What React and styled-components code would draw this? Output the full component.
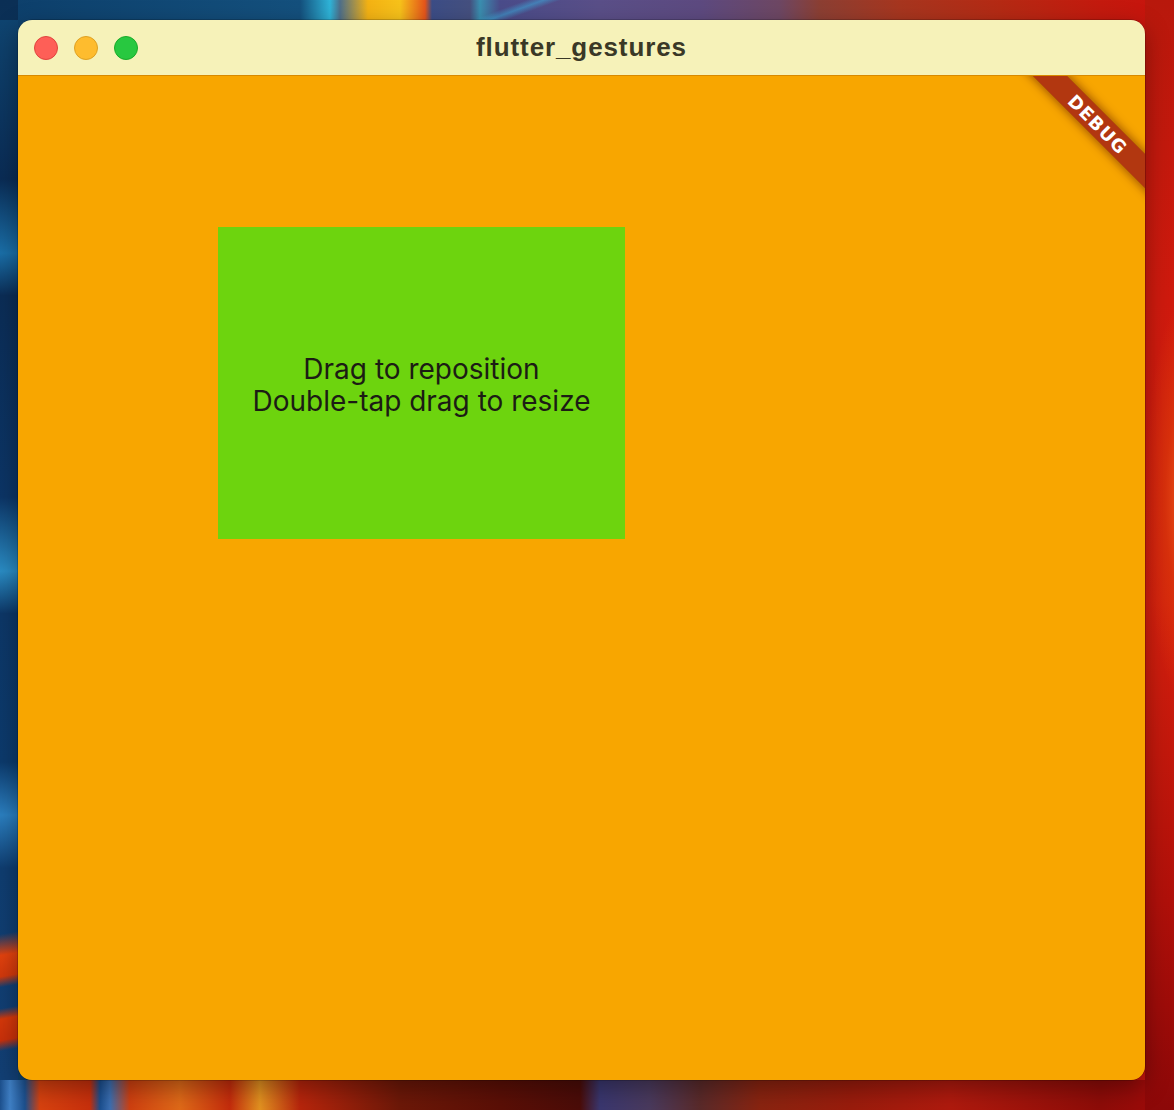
import React from "react";
import styled, { createGlobalStyle } from "styled-components";

const GlobalStyle = createGlobalStyle`
  html, body {
    margin: 0;
    padding: 0;
  }
  body {
    width: 1174px;
    height: 1110px;
    overflow: hidden;
    font-family: "Liberation Sans", Arial, sans-serif;
    background:
      linear-gradient(160deg, rgba(60,170,220,0) 0px, rgba(60,170,220,0) 180px, rgba(60,170,220,0.55) 186px, rgba(60,170,220,0) 192px, rgba(60,170,220,0) 100%),
      radial-gradient(ellipse 60px 30px at 20px 960px, #e8420f 0%, #d83a0c 60%, rgba(216,58,12,0) 100%),
      radial-gradient(ellipse 50px 12px at 20px 1000px, #d43508 0%, rgba(212,53,8,0) 100%),
      linear-gradient(90deg,
        #0d3f6b 0px, #14507d 300px, #2fb4d8 330px, #4e6f8a 340px,
        #f4b213 368px, #f7c21a 400px, #e5551a 425px, #3c4d86 432px,
        #45507f 470px, #3a8fb0 480px, #4a4c8a 500px, #5a4f88 600px,
        #5d4a80 700px, #6e4763 780px, #8c3f33 820px, #a7361f 900px,
        #b52a14 1000px, #c41a0e 1100px, #c8120c 1174px);
  }
  #root {
    width: 1174px;
    height: 1110px;
  }
`;

const Desktop = styled.div`
  position: relative;
  width: 1174px;
  height: 1110px;
  padding: 20px 29px 30px 18px;
  box-sizing: border-box;
  background: linear-gradient(180deg, #0b2f55 0%, #0d3f6b 40%, #0a2a50 100%) left / 18px 100% no-repeat;
`;

const BottomWall = styled.div`
  position: absolute;
  left: 0;
  right: 0;
  bottom: 0;
  height: 30px;
  z-index: 0;
  background: linear-gradient(90deg,
    #1c4f8c 0px, #3f7fc4 10px, #1c4f8c 25px, #d8420f 40px, #c9300c 90px,
    #1b4f8f 100px, #3b6fb2 110px, #d04010 130px, #e06a18 180px, #c52c0c 230px,
    #e39220 260px, #b8250c 300px, #6d1808 400px, #5b0f06 500px, #4b0c08 580px,
    #3a3770 600px, #4a3a5d 650px, #5a2a2a 700px, #8a2410 760px, #9a1c0c 850px,
    #b01a0e 950px, #8e0c08 1100px, #a20a0a 1174px);
`;

const LeftWall = styled.div`
  position: absolute;
  left: 0;
  top: 20px;
  width: 18px;
  height: 1060px;
  z-index: 0;
  background:
    linear-gradient(170deg, rgba(0,0,0,0) 0%, rgba(0,0,0,0) 86%, #e2420e 88%, #d0380c 90%, rgba(0,0,0,0) 91%, rgba(0,0,0,0) 93%, #d4380a 94%, #c9300a 96%, rgba(0,0,0,0) 97%),
    linear-gradient(180deg, #0f4470 0%, #0a2c55 15%, #1a6fa8 22%, #0b2d56 26%, #0c3566 45%, #2a8cc4 52%, #0d3767 56%, #0c3a6c 70%, #2b7fc0 75%, #0f3d70 80%, #123f74 100%);
`;

const RightWall = styled.div`
  position: absolute;
  top: 0;
  right: 0;
  width: 29px;
  height: 1110px;
  z-index: 0;
  background:
    radial-gradient(ellipse 40px 200px at 40px 500px, #e8541a 0%, #d8300c 50%, rgba(200,20,10,0) 100%),
    linear-gradient(180deg, #b8180c 0px, #cf1a0e 300px, #d5200e 600px, #b0100a 900px, #8c0808 1110px);
`;

const Window = styled.div`
  position: relative;
  z-index: 1;
  display: flex;
  flex-direction: column;
  width: 1127px;
  height: 1060px;
  border-radius: 14px;
  overflow: hidden;
  box-shadow: 0 0 0 0.5px rgba(0,0,0,0.35), 0 8px 24px rgba(0,0,0,0.35);
`;

const TitleBar = styled.div`
  position: relative;
  display: flex;
  align-items: center;
  justify-content: center;
  height: 56px;
  flex: 0 0 56px;
  background: #f6f2b9;
  border-bottom: 1px solid #d88a00;
  box-sizing: border-box;
`;

const Lights = styled.div`
  position: absolute;
  left: 16px;
  top: 16px;
  display: flex;
  gap: 16px;
`;

const Light = styled.span`
  width: 24px;
  height: 24px;
  border-radius: 50%;
  box-sizing: border-box;
  background: ${(p) => p.$color};
  border: 1px solid ${(p) => p.$border};
`;

const Title = styled.h1`
  margin: 0;
  font-family: "Liberation Sans", Arial, sans-serif;
  font-weight: 700;
  font-size: 26px;
  color: #3a3826;
  letter-spacing: 0.9px;
`;

const Canvas = styled.div`
  position: relative;
  flex: 1;
  background: #f8a600;
  overflow: hidden;
`;

const Draggable = styled.div`
  position: absolute;
  display: flex;
  align-items: center;
  justify-content: center;
  box-sizing: border-box;
  padding-top: 4px;
  background: #6dd40e;
  text-align: center;
  font-family: Inter, Roboto, sans-serif;
  font-size: 28px;
  line-height: 32px;
  color: #1c1c14;
`;

const Banner = styled.div`
  position: absolute;
  top: 36px;
  right: -53px;
  width: 200px;
  height: 24px;
  transform: rotate(45deg);
  transform-origin: center;
  display: flex;
  align-items: center;
  justify-content: center;
  background: rgba(158, 24, 20, 0.78);
  box-shadow: 0 0 8px 2px rgba(90, 20, 0, 0.5);
  color: #ffffff;
  font-family: "DejaVu Sans", "Liberation Sans", sans-serif;
  font-weight: 700;
  font-size: 18px;
  letter-spacing: 1px;
`;

export default function App() {
  return (
    <>
      <GlobalStyle />
      <Desktop>
        <LeftWall />
        <BottomWall />
        <RightWall />
        <Window>
          <TitleBar>
            <Lights>
              <Light $color="#fe5f57" $border="#e0443e" />
              <Light $color="#febc2e" $border="#dea123" />
              <Light $color="#28c840" $border="#1aab29" />
            </Lights>
            <Title>flutter_gestures</Title>
          </TitleBar>
          <Canvas>
            <Draggable style={{ left: 200, top: 151, width: 407, height: 312 }}>
              <div>
                Drag to reposition
                <br />
                Double-tap drag to resize
              </div>
            </Draggable>
            <Banner>DEBUG</Banner>
          </Canvas>
        </Window>
      </Desktop>
    </>
  );
}
